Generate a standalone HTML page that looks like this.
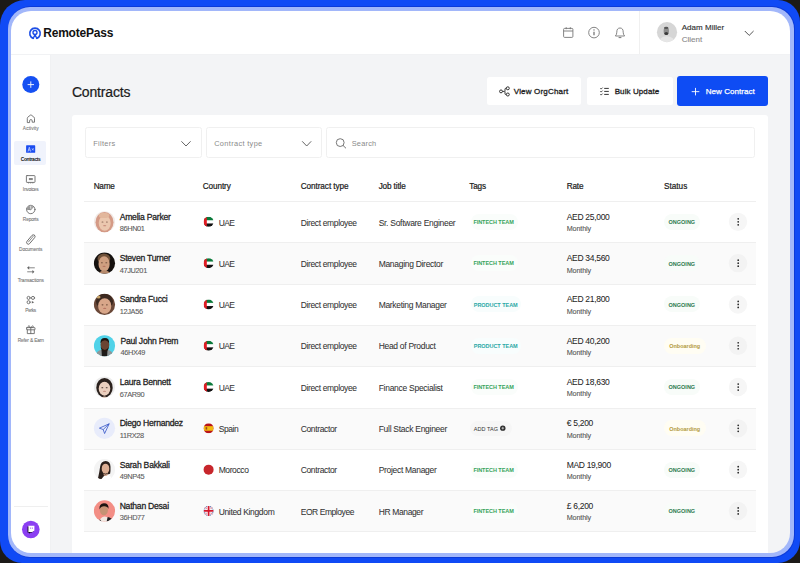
<!DOCTYPE html>
<html><head><meta charset="utf-8"><style>
html,body{margin:0;padding:0;width:800px;height:563px;overflow:hidden;background:#1c1a18;}
#frame{position:absolute;left:0;top:0;width:800px;height:563px;background:#104af5;border-radius:25px 22px 22px 22px;}
#edge{position:absolute;left:7.5px;top:6px;width:787.5px;height:552px;background:#0c3ad8;border-radius:23px;}
#lb{position:absolute;left:8px;top:7px;width:786px;height:550px;background:#a2b7fa;border-radius:22px;}
#app{position:absolute;left:0;top:0;width:800px;height:563px;clip-path:inset(11px 10px 10px 11px round 20px);}
#app span{position:absolute;white-space:pre;line-height:normal;font-family:"Liberation Sans",sans-serif;}
svg{position:absolute;left:0;top:0;}
</style></head><body>
<div id="frame"></div><div id="edge"></div><div id="lb"></div>
<div id="app">
<div style="position:absolute;left:0px;top:0px;width:800px;height:54.5px;background:#ffffff;border-radius:0px;"></div>
<div style="position:absolute;left:0px;top:54px;width:800px;height:1px;background:#f1f2f4;border-radius:0px;"></div>
<div style="position:absolute;left:50px;top:55px;width:750px;height:508px;background:#f3f4f6;border-radius:0px;"></div>
<div style="position:absolute;left:0px;top:55px;width:49.5px;height:508px;background:#ffffff;border-radius:0px;"></div>
<div style="position:absolute;left:49.5px;top:55px;width:1.0px;height:508px;background:#f0f1f3;border-radius:0px;"></div>
<div style="position:absolute;left:638.5px;top:11px;width:1.0px;height:43px;background:#f0f0f0;border-radius:0px;"></div>
<div style="position:absolute;left:14px;top:141px;width:32px;height:23.5px;background:#f0f3fc;border-radius:2px;"></div>
<div style="position:absolute;left:13.5px;top:506.2px;width:34.5px;height:0.8000000000000114px;background:#efefef;border-radius:0px;"></div>
<div style="position:absolute;left:487px;top:76.8px;width:94px;height:28.400000000000006px;background:#ffffff;border-radius:2.5px;"></div>
<div style="position:absolute;left:587px;top:76.8px;width:85.5px;height:28.400000000000006px;background:#ffffff;border-radius:2.5px;"></div>
<div style="position:absolute;left:677px;top:76px;width:91.29999999999995px;height:30px;background:#0e4cf4;border-radius:3px;"></div>
<div style="position:absolute;left:72px;top:115px;width:696px;height:485px;background:#ffffff;border-radius:3px;"></div>
<div style="position:absolute;left:85px;top:127.3px;width:116.69999999999999px;height:30.89999999999999px;background:#fff;border-radius:2.5px;box-sizing:border-box;border:1px solid #f0f0f0;"></div>
<div style="position:absolute;left:205.5px;top:127.3px;width:116.5px;height:30.89999999999999px;background:#fff;border-radius:2.5px;box-sizing:border-box;border:1px solid #f0f0f0;"></div>
<div style="position:absolute;left:326.3px;top:127.3px;width:428.8px;height:30.89999999999999px;background:#fff;border-radius:2.5px;box-sizing:border-box;border:1px solid #f0f0f0;"></div>
<div style="position:absolute;left:84px;top:201px;width:672px;height:1px;background:#efefef;border-radius:0px;"></div>
<div style="position:absolute;left:84px;top:242.3px;width:672px;height:1.0px;background:#efefef;border-radius:0px;"></div>
<div style="position:absolute;left:471px;top:213.85px;width:47px;height:16.0px;background:#fafdfb;border-radius:8px;"></div>
<div style="position:absolute;left:664px;top:213.85px;width:36px;height:16.0px;background:#f8fcf9;border-radius:8px;"></div>
<div style="position:absolute;left:84px;top:243.3px;width:672px;height:40.5px;background:#fafafa;border-radius:0px;"></div>
<div style="position:absolute;left:84px;top:283.6px;width:672px;height:1.0px;background:#efefef;border-radius:0px;"></div>
<div style="position:absolute;left:471px;top:255.14999999999998px;width:47px;height:16.0px;background:#fafdfb;border-radius:8px;"></div>
<div style="position:absolute;left:664px;top:255.14999999999998px;width:36px;height:16.0px;background:#f8fcf9;border-radius:8px;"></div>
<div style="position:absolute;left:84px;top:324.9px;width:672px;height:1.0px;background:#efefef;border-radius:0px;"></div>
<div style="position:absolute;left:471px;top:296.44999999999993px;width:50px;height:16.0px;background:#f8fdfd;border-radius:8px;"></div>
<div style="position:absolute;left:664px;top:296.44999999999993px;width:36px;height:16.0px;background:#f8fcf9;border-radius:8px;"></div>
<div style="position:absolute;left:84px;top:325.9px;width:672px;height:40.5px;background:#fafafa;border-radius:0px;"></div>
<div style="position:absolute;left:84px;top:366.2px;width:672px;height:1.0px;background:#efefef;border-radius:0px;"></div>
<div style="position:absolute;left:471px;top:337.74999999999994px;width:50px;height:16.0px;background:#f8fdfd;border-radius:8px;"></div>
<div style="position:absolute;left:664px;top:337.74999999999994px;width:42px;height:16.0px;background:#fffdf3;border-radius:8px;"></div>
<div style="position:absolute;left:84px;top:407.5px;width:672px;height:1.0px;background:#efefef;border-radius:0px;"></div>
<div style="position:absolute;left:471px;top:379.04999999999995px;width:47px;height:16.0px;background:#fafdfb;border-radius:8px;"></div>
<div style="position:absolute;left:664px;top:379.04999999999995px;width:36px;height:16.0px;background:#f8fcf9;border-radius:8px;"></div>
<div style="position:absolute;left:84px;top:408.5px;width:672px;height:40.5px;background:#fafafa;border-radius:0px;"></div>
<div style="position:absolute;left:84px;top:448.8px;width:672px;height:1.0px;background:#efefef;border-radius:0px;"></div>
<div style="position:absolute;left:470px;top:420.84999999999997px;width:42px;height:15.0px;background:#f6f6f6;border-radius:8px;"></div>
<div style="position:absolute;left:664px;top:420.34999999999997px;width:42px;height:16.0px;background:#fffdf3;border-radius:8px;"></div>
<div style="position:absolute;left:84px;top:490.1px;width:672px;height:1.0px;background:#efefef;border-radius:0px;"></div>
<div style="position:absolute;left:471px;top:461.65px;width:47px;height:16.0px;background:#fafdfb;border-radius:8px;"></div>
<div style="position:absolute;left:664px;top:461.65px;width:36px;height:16.0px;background:#f8fcf9;border-radius:8px;"></div>
<div style="position:absolute;left:84px;top:491.09999999999997px;width:672px;height:40.49999999999994px;background:#fafafa;border-radius:0px;"></div>
<div style="position:absolute;left:84px;top:531.3999999999999px;width:672px;height:1.0px;background:#efefef;border-radius:0px;"></div>
<div style="position:absolute;left:471px;top:502.94999999999993px;width:47px;height:16.0px;background:#fafdfb;border-radius:8px;"></div>
<div style="position:absolute;left:664px;top:502.94999999999993px;width:36px;height:16.0px;background:#f8fcf9;border-radius:8px;"></div>
<svg width="800" height="563" viewBox="0 0 800 563">
<g fill="none" stroke="#1d4fe6" stroke-linecap="butt"><path d="M33.3 38.4 A5.25 5.25 0 1 1 36.7 38.4" stroke-width="1.7"/><circle cx="35" cy="32.5" r="2.0" stroke-width="1.4"/><path d="M33.2 39 Q33.8 36.4 35 34.6 Q36.2 36.4 36.8 39" stroke-width="1.3"/></g>
<g fill="none" stroke="#777" stroke-width="0.9"><rect x="563.6" y="28.4" width="9.3" height="9" rx="1"/><path d="M563.6 31 H572.9"/><path d="M566.2 27.2 V29.2 M570.3 27.2 V29.2"/><circle cx="594" cy="32.6" r="5.3"/><path d="M594 31.7 V35.3" stroke="#666" stroke-width="1.15"/><path d="M615.4 36 Q616.8 34.6 616.8 32.2 Q616.8 28 620 28 Q623.2 28 623.2 32.2 Q623.2 34.6 624.6 36 Z"/><path d="M618.6 37.6 H621.4" stroke-width="1"/></g><circle cx="594" cy="29.9" r="0.7" fill="#666"/>
<defs><clipPath id="cav"><circle cx="667" cy="32.2" r="10.1"/></clipPath></defs><circle cx="667" cy="32.2" r="10.1" fill="#d6d6d6"/><g clip-path="url(#cav)"><path d="M658 44 Q659 36.6 666.5 36.2 Q675 36.6 676 44 Z" fill="#e6e6e6"/><ellipse cx="666.3" cy="31" rx="2.7" ry="4" fill="#8c8c8c"/><ellipse cx="666.3" cy="33.6" rx="1.9" ry="1.5" fill="#3a3a3a"/><ellipse cx="666.2" cy="27.9" rx="2.2" ry="1.1" fill="#555"/></g>
<path d="M744.8 31 L749.2 35.4 L753.6 31" fill="none" stroke="#4a4a4a" stroke-width="0.95"/>
<circle cx="30.8" cy="84.6" r="8.5" fill="#1550f2"/><path d="M30.8 81.4 V87.8 M27.6 84.6 H34" stroke="#fff" stroke-width="0.9"/>
<g fill="none" stroke="#6a6a6a" stroke-width="0.9" stroke-linejoin="round" stroke-linecap="round"><path d="M27.3 122.2 V118.4 Q27.3 117.6 28 117 L30.6 115 Q30.9 114.8 31.2 115 L33.8 117 Q34.5 117.6 34.5 118.4 V122.2 H32.2 V120.8 Q32.2 119.6 30.9 119.6 Q29.6 119.6 29.6 120.8 V122.2 Z"/><rect x="26.4" y="175.6" width="8.6" height="6.8" rx="0.6"/><path d="M28.6 183.2 V182.6 M30.7 183.2 V182.6 M32.8 183.2 V182.6" stroke-width="0.6"/><circle cx="30.8" cy="209.5" r="4.2"/><path d="M26.7 209 L30.8 209.8 L33.6 206.4"/><rect x="-1.75" y="-5.6" width="3.5" height="11.2" rx="1.75" transform="translate(30.8 239.5) rotate(40)"/><path d="M-0.2 -4 V3.4" transform="translate(30.8 239.5) rotate(40)" stroke-width="0.7"/><path d="M29 267.8 H34.4 M27.6 271.8 H33" stroke="#888" stroke-width="1"/><circle cx="28.6" cy="297.9" r="1.55"/><circle cx="33" cy="297.9" r="1.55"/><circle cx="28.6" cy="302.2" r="1.55"/><rect x="26.6" y="327.6" width="8.4" height="2.2" rx="0.4"/><path d="M27.3 329.8 V333.6 H34.3 V329.8 M30.8 327.6 V333.6"/><path d="M30.8 327.6 Q28.6 324.4 28.2 326.4 Q28 327.4 30.8 327.6 Q33 324.4 33.4 326.4 Q33.6 327.4 30.8 327.6" stroke-width="0.8"/></g><g fill="#666"><rect x="28.9" y="178" width="3.9" height="2.1" fill="#888"/><path d="M30.8 209.8 L26.7 209 Q27.2 206.6 29.6 205.6 Z" fill="#9a9a9a"/><path d="M30.8 209.5 L33.6 206.4 Q32.2 205.3 30.4 205.3 Z" fill="#aaa"/><path d="M27 267.8 L29.2 265.9 V269.7 Z M34.4 271.8 L32.4 269.9 V273.7 Z"/><path d="M31.8 300.9 L34.2 302.2 L31.8 303.5 Z"/></g><rect x="26.1" y="145.3" width="9.1" height="7.5" rx="0.6" fill="#1a4cf0"/><path d="M28 151.6 L29.3 147.2 L30.6 151.6 M28.5 150 H30.1 M32 148.4 L33.6 150.4 M33.6 148.4 L32 150.4" fill="none" stroke="#dfe6ff" stroke-width="0.65"/>
<circle cx="30.8" cy="529.5" r="8.8" fill="#8b3ff2"/><path d="M27.6 526.4 H34 V531 L31.8 532.6 H30.4 L29.2 533.8 V532.6 H27.6 Z" fill="#000"/><path d="M28.4 525.8 H34.4 V530.4 L32.4 532 H28.4 Z" fill="#fff"/><path d="M30.6 527.4 V529 M32.4 527.4 V529" stroke="#8b3ff2" stroke-width="0.6"/>
<g fill="none" stroke="#2a2a2a" stroke-width="0.95"><circle cx="501" cy="91.4" r="1.45"/><circle cx="507.8" cy="88.3" r="1.5"/><circle cx="507.8" cy="94.5" r="1.5"/><path d="M502.5 91.4 H504.2 Q505 91.4 505 90.6 V89.1 Q505 88.3 505.8 88.3 H506.3 M505 91.4 V93.7 Q505 94.5 505.8 94.5 H506.3"/><path d="M600.3 88.3 L601.1 89.1 L602.6 87.6 M600.3 91.3 L601.1 92.1 L602.6 90.6 M600.3 94.3 L601.1 95.1 L602.6 93.6" stroke-width="0.85"/><path d="M604.2 88.4 H608.8 M604.2 91.4 H608.8 M604.2 94.4 H608.8" stroke-width="0.95"/></g><path d="M695.5 87.9 V95.4 M691.7 91.65 H699.3" stroke="#fff" stroke-width="0.9"/>
<g fill="none" stroke="#555" stroke-width="0.9"><path d="M181.4 141.3 L186 146 L190.6 141.3"/><path d="M302.2 141.3 L306.7 146 L311.2 141.3"/><circle cx="340.2" cy="142.6" r="3.9" stroke="#666"/><path d="M343 145.4 L346 148.3" stroke="#666"/></g>
<clipPath id="av0"><circle cx="0" cy="0" r="10.6"/></clipPath>
<g clip-path="url(#av0)" transform="translate(104.5 221.85)"><rect x="-11" y="-11" width="22" height="22" fill="#f2ebe8"/><ellipse cx="0" cy="0.4" rx="9" ry="10.2" fill="#d49a86"/><ellipse cx="0.2" cy="1.2" rx="6" ry="7.6" fill="#ebc7ae"/><ellipse cx="-0.5" cy="-6.4" rx="5.2" ry="2.6" fill="#e2b79c"/><ellipse cx="-2.0" cy="0.2" rx="1.0" ry="0.55" fill="#6a4436" opacity="0.75"/><ellipse cx="2.4" cy="0.2" rx="1.0" ry="0.55" fill="#6a4436" opacity="0.75"/><ellipse cx="0.2" cy="3.8" rx="1.6" ry="0.6" fill="#b0655a" opacity="0.6"/></g>
<clipPath id="fl0"><circle cx="208.6" cy="221.85" r="5"/></clipPath><g clip-path="url(#fl0)"><rect x="203.6" y="216.85" width="10" height="10" fill="#fff"/><rect x="203.6" y="216.85" width="10" height="3.4" fill="#0a7a3a"/><rect x="203.6" y="223.45" width="10" height="3.4" fill="#111"/><rect x="203.6" y="216.85" width="3.2" height="10" fill="#e01b22"/></g>
<circle cx="738" cy="221.85" r="9.2" fill="#f6f6f6"/><circle cx="738.2" cy="218.85" r="0.85" fill="#222"/><circle cx="738.2" cy="221.85" r="0.85" fill="#222"/><circle cx="738.2" cy="224.85" r="0.85" fill="#222"/>
<clipPath id="av1"><circle cx="0" cy="0" r="10.6"/></clipPath>
<g clip-path="url(#av1)" transform="translate(104.5 263.15)"><rect x="-11" y="-11" width="22" height="22" fill="#15110f"/><ellipse cx="-0.6" cy="-4.4" rx="6.4" ry="5.2" fill="#6e5038"/><ellipse cx="-0.4" cy="0.8" rx="5.6" ry="7.6" fill="#cf9f80"/><path d="M-5 9 Q0 5 5 9 L5 11 L-5 11 Z" fill="#b68a6c"/><ellipse cx="-2.60" cy="-0.40" rx="1.00" ry="0.55" fill="#4a2e20" opacity="0.75"/><ellipse cx="1.80" cy="-0.40" rx="1.00" ry="0.55" fill="#4a2e20" opacity="0.75"/><ellipse cx="-0.40" cy="3.20" rx="1.60" ry="0.6" fill="#a5574a" opacity="0.6"/></g>
<clipPath id="fl1"><circle cx="208.6" cy="263.15" r="5"/></clipPath><g clip-path="url(#fl1)"><rect x="203.6" y="258.15" width="10" height="10" fill="#fff"/><rect x="203.6" y="258.15" width="10" height="3.4" fill="#0a7a3a"/><rect x="203.6" y="264.75" width="10" height="3.4" fill="#111"/><rect x="203.6" y="258.15" width="3.2" height="10" fill="#e01b22"/></g>
<circle cx="738" cy="263.15" r="9.2" fill="#f3f3f3"/><circle cx="738.2" cy="260.15" r="0.85" fill="#222"/><circle cx="738.2" cy="263.15" r="0.85" fill="#222"/><circle cx="738.2" cy="266.15" r="0.85" fill="#222"/>
<clipPath id="av2"><circle cx="0" cy="0" r="10.6"/></clipPath>
<g clip-path="url(#av2)" transform="translate(104.5 304.44999999999993)"><rect x="-11" y="-11" width="22" height="22" fill="#6a4838"/><ellipse cx="0" cy="-3" rx="8.6" ry="7.6" fill="#3c2920"/><ellipse cx="0.2" cy="1.6" rx="6.6" ry="7.8" fill="#d8a689"/><ellipse cx="-6" cy="-7.4" rx="2" ry="1.5" fill="#c9a56a"/><ellipse cx="-2.00" cy="0.40" rx="1.00" ry="0.55" fill="#4a2e20" opacity="0.75"/><ellipse cx="2.40" cy="0.40" rx="1.00" ry="0.55" fill="#4a2e20" opacity="0.75"/><ellipse cx="0.20" cy="4.00" rx="1.60" ry="0.6" fill="#a5574a" opacity="0.6"/></g>
<clipPath id="fl2"><circle cx="208.6" cy="304.44999999999993" r="5"/></clipPath><g clip-path="url(#fl2)"><rect x="203.6" y="299.44999999999993" width="10" height="10" fill="#fff"/><rect x="203.6" y="299.44999999999993" width="10" height="3.4" fill="#0a7a3a"/><rect x="203.6" y="306.04999999999995" width="10" height="3.4" fill="#111"/><rect x="203.6" y="299.44999999999993" width="3.2" height="10" fill="#e01b22"/></g>
<circle cx="738" cy="304.44999999999993" r="9.2" fill="#f6f6f6"/><circle cx="738.2" cy="301.44999999999993" r="0.85" fill="#222"/><circle cx="738.2" cy="304.44999999999993" r="0.85" fill="#222"/><circle cx="738.2" cy="307.44999999999993" r="0.85" fill="#222"/>
<clipPath id="av3"><circle cx="0" cy="0" r="10.6"/></clipPath>
<g clip-path="url(#av3)" transform="translate(104.5 345.74999999999994)"><rect x="-11" y="-11" width="22" height="22" fill="#50d2e8"/><path d="M-10 11 Q-8 5 -3 4 L3 4 Q8 5 10 11 Z" fill="#8f9596"/><path d="M-3 4 L3 4 L2.6 11 L-2.6 11 Z" fill="#1e1a18"/><ellipse cx="0.4" cy="-1" rx="4.4" ry="5.6" fill="#6a4432"/><path d="M-4 -2.5 Q-4.4 -7.8 0.4 -7.8 Q5 -7.8 4.6 -2.5 Q3 -5.5 0.4 -5.5 Q-2.4 -5.5 -4 -2.5 Z" fill="#1f1511"/><path d="M-3.8 1 Q0.4 7.6 4.4 1 Q4 5.5 0.4 6 Q-3.4 5.5 -3.8 1 Z" fill="#24160f"/></g>
<clipPath id="fl3"><circle cx="208.6" cy="345.74999999999994" r="5"/></clipPath><g clip-path="url(#fl3)"><rect x="203.6" y="340.74999999999994" width="10" height="10" fill="#fff"/><rect x="203.6" y="340.74999999999994" width="10" height="3.4" fill="#0a7a3a"/><rect x="203.6" y="347.34999999999997" width="10" height="3.4" fill="#111"/><rect x="203.6" y="340.74999999999994" width="3.2" height="10" fill="#e01b22"/></g>
<circle cx="738" cy="345.74999999999994" r="9.2" fill="#f3f3f3"/><circle cx="738.2" cy="342.74999999999994" r="0.85" fill="#222"/><circle cx="738.2" cy="345.74999999999994" r="0.85" fill="#222"/><circle cx="738.2" cy="348.74999999999994" r="0.85" fill="#222"/>
<clipPath id="av4"><circle cx="0" cy="0" r="10.6"/></clipPath>
<g clip-path="url(#av4)" transform="translate(104.5 387.04999999999995)"><rect x="-11" y="-11" width="22" height="22" fill="#ededed"/><ellipse cx="0" cy="0.6" rx="8.2" ry="9.6" fill="#2b211d"/><ellipse cx="0" cy="1.6" rx="5.8" ry="7" fill="#ebcfbe"/><path d="M-3 11 Q0 8 3 11 Z" fill="#e0c0ae"/><ellipse cx="-2.20" cy="0.60" rx="1.00" ry="0.55" fill="#3a2a24" opacity="0.75"/><ellipse cx="2.20" cy="0.60" rx="1.00" ry="0.55" fill="#3a2a24" opacity="0.75"/><ellipse cx="0.00" cy="4.20" rx="1.60" ry="0.6" fill="#a5574a" opacity="0.6"/></g>
<clipPath id="fl4"><circle cx="208.6" cy="387.04999999999995" r="5"/></clipPath><g clip-path="url(#fl4)"><rect x="203.6" y="382.04999999999995" width="10" height="10" fill="#fff"/><rect x="203.6" y="382.04999999999995" width="10" height="3.4" fill="#0a7a3a"/><rect x="203.6" y="388.65" width="10" height="3.4" fill="#111"/><rect x="203.6" y="382.04999999999995" width="3.2" height="10" fill="#e01b22"/></g>
<circle cx="738" cy="387.04999999999995" r="9.2" fill="#f6f6f6"/><circle cx="738.2" cy="384.04999999999995" r="0.85" fill="#222"/><circle cx="738.2" cy="387.04999999999995" r="0.85" fill="#222"/><circle cx="738.2" cy="390.04999999999995" r="0.85" fill="#222"/>
<clipPath id="av5"><circle cx="0" cy="0" r="10.6"/></clipPath>
<circle cx="104.5" cy="428.34999999999997" r="10.6" fill="#e8ecfb"/><path d="M99.4 428.15 L109.2 423.74999999999994 L104.6 433.54999999999995 L103.2 429.54999999999995 Z M103.2 429.54999999999995 L109.2 423.74999999999994" fill="none" stroke="#3556c8" stroke-width="0.8" stroke-linejoin="round"/>
<clipPath id="fl5"><circle cx="208.6" cy="428.34999999999997" r="5"/></clipPath><g clip-path="url(#fl5)"><rect x="203.6" y="423.34999999999997" width="10" height="10" fill="#b8141a"/><rect x="203.6" y="426.15" width="10" height="4.6" fill="#f2b90f"/><rect x="205.6" y="427.15" width="1.6" height="2.4" fill="#a0461c"/></g>
<circle cx="502.8" cy="428.15" r="2.7" fill="#2a2a2a"/><path d="M502.8 426.74999999999994 V429.54999999999995 M501.4 428.15 H504.2" stroke="#fff" stroke-width="0.6"/>
<circle cx="738" cy="428.34999999999997" r="9.2" fill="#f3f3f3"/><circle cx="738.2" cy="425.34999999999997" r="0.85" fill="#222"/><circle cx="738.2" cy="428.34999999999997" r="0.85" fill="#222"/><circle cx="738.2" cy="431.34999999999997" r="0.85" fill="#222"/>
<clipPath id="av6"><circle cx="0" cy="0" r="10.6"/></clipPath>
<g clip-path="url(#av6)" transform="translate(104.5 469.65)"><rect x="-11" y="-11" width="22" height="22" fill="#f4f4f4"/><path d="M-4 11 Q-2 5 2 5 Q7 5.4 8 11 Z" fill="#ffffff"/><path d="M-6.6 9 Q-5 2 -4.4 -3 Q-3.6 -8.4 1.2 -8.6 Q5.8 -8.4 6 -3 Q6.2 2 5.6 4 L2 5 Q-1 6 -3 9.4 Z" fill="#2a1f1b"/><ellipse cx="1" cy="-1" rx="3.8" ry="5" fill="#dcae94"/><path d="M-1 3.4 Q1 6.4 3.4 3.4 L3 5.6 Q1 6.8 -0.8 5.6 Z" fill="#cf9f86"/></g>
<circle cx="208.6" cy="469.65" r="5" fill="#c7262c"/>
<circle cx="738" cy="469.65" r="9.2" fill="#f6f6f6"/><circle cx="738.2" cy="466.65" r="0.85" fill="#222"/><circle cx="738.2" cy="469.65" r="0.85" fill="#222"/><circle cx="738.2" cy="472.65" r="0.85" fill="#222"/>
<clipPath id="av7"><circle cx="0" cy="0" r="10.6"/></clipPath>
<g clip-path="url(#av7)" transform="translate(104.5 510.94999999999993)"><rect x="-11" y="-11" width="22" height="22" fill="#f38e85"/><path d="M-6 11 Q-4 6 0 5.5 Q5 6 9 11 Z" fill="#f1e6e0"/><path d="M2 11 L3.2 6 Q7 6.4 9.5 11 Z" fill="#1f1f22"/><path d="M-6 11 L-4.6 8.4 L-2.6 11 Z" fill="#1f1f22"/><ellipse cx="-0.6" cy="-0.8" rx="4" ry="5.2" fill="#c59274"/><path d="M-5 -1.5 Q-5.6 -7.4 -0.6 -7.6 Q4.6 -7.6 4 -2 Q3 -4.8 -0.6 -4.6 Q-3.6 -4.6 -5 -1.5 Z" fill="#1c1411"/></g>
<clipPath id="fl7"><circle cx="208.6" cy="510.94999999999993" r="5"/></clipPath><g clip-path="url(#fl7)"><rect x="203.6" y="505.94999999999993" width="10" height="10" fill="#2a3a8a"/><path d="M203.6 505.94999999999993 L213.6 515.9499999999999 M213.6 505.94999999999993 L203.6 515.9499999999999" stroke="#fff" stroke-width="2.4"/><path d="M203.6 505.94999999999993 L213.6 515.9499999999999 M213.6 505.94999999999993 L203.6 515.9499999999999" stroke="#d4162c" stroke-width="0.7"/><path d="M208.6 505.94999999999993 V515.9499999999999 M203.6 510.94999999999993 H213.6" stroke="#fff" stroke-width="3.2"/><path d="M208.6 505.94999999999993 V515.9499999999999 M203.6 510.94999999999993 H213.6" stroke="#d4162c" stroke-width="1.8"/></g>
<circle cx="738" cy="510.94999999999993" r="9.2" fill="#f3f3f3"/><circle cx="738.2" cy="507.94999999999993" r="0.85" fill="#222"/><circle cx="738.2" cy="510.94999999999993" r="0.85" fill="#222"/><circle cx="738.2" cy="513.9499999999999" r="0.85" fill="#222"/>
</svg>
<span style="left:43.27px;top:25.64px;font-size:12px;font-weight:700;color:#111;letter-spacing:-0.217px;">RemotePass</span>
<span style="left:681.68px;top:22.66px;font-size:8px;font-weight:400;color:#333;letter-spacing:0.033px;-webkit-text-stroke:0.15px #333">Adam Miller</span>
<span style="left:681.68px;top:34.76px;font-size:8px;font-weight:400;color:#888;letter-spacing:0.021px;-webkit-text-stroke:0.10px #888">Client</span>
<span style="left:22.86px;top:126.36px;font-size:4.8px;font-weight:400;color:#7a7a7a;letter-spacing:0.090px;-webkit-text-stroke:0.10px #7a7a7a">Activity</span>
<span style="left:20.76px;top:156.86px;font-size:4.8px;font-weight:700;color:#111;letter-spacing:-0.294px;">Contracts</span>
<span style="left:22.86px;top:186.86px;font-size:4.8px;font-weight:400;color:#7a7a7a;letter-spacing:-0.253px;-webkit-text-stroke:0.10px #7a7a7a">Invoices</span>
<span style="left:22.86px;top:216.86px;font-size:4.8px;font-weight:400;color:#7a7a7a;letter-spacing:-0.160px;-webkit-text-stroke:0.10px #7a7a7a">Reports</span>
<span style="left:19.11px;top:247.36px;font-size:4.8px;font-weight:400;color:#7a7a7a;letter-spacing:-0.116px;-webkit-text-stroke:0.10px #7a7a7a">Documents</span>
<span style="left:17.66px;top:277.86px;font-size:4.8px;font-weight:400;color:#7a7a7a;letter-spacing:-0.096px;-webkit-text-stroke:0.10px #7a7a7a">Transactions</span>
<span style="left:25.36px;top:307.86px;font-size:4.8px;font-weight:400;color:#7a7a7a;letter-spacing:-0.357px;-webkit-text-stroke:0.10px #7a7a7a">Perks</span>
<span style="left:17.66px;top:337.86px;font-size:4.8px;font-weight:400;color:#7a7a7a;letter-spacing:-0.136px;-webkit-text-stroke:0.10px #7a7a7a">Refer &amp; Earn</span>
<span style="left:71.94px;top:83.93px;font-size:14px;font-weight:400;color:#1b1b1b;letter-spacing:-0.180px;-webkit-text-stroke:0.20px #1b1b1b">Contracts</span>
<span style="left:513.78px;top:86.86px;font-size:8px;font-weight:400;color:#1e1e1e;letter-spacing:0.178px;-webkit-text-stroke:0.30px #1e1e1e">View OrgChart</span>
<span style="left:614.68px;top:86.76px;font-size:8px;font-weight:400;color:#1e1e1e;letter-spacing:0.097px;-webkit-text-stroke:0.30px #1e1e1e">Bulk Update</span>
<span style="left:705.68px;top:86.76px;font-size:8px;font-weight:400;color:#fff;letter-spacing:0.063px;-webkit-text-stroke:0.25px #fff">New Contract</span>
<span style="left:93.30px;top:139.20px;font-size:7.4px;font-weight:400;color:#8a8a8a;letter-spacing:0.299px;">Filters</span>
<span style="left:214.20px;top:139.20px;font-size:7.4px;font-weight:400;color:#8a8a8a;letter-spacing:0.337px;">Contract type</span>
<span style="left:351.70px;top:139.20px;font-size:7.4px;font-weight:400;color:#8a8a8a;letter-spacing:0.219px;">Search</span>
<span style="left:93.67px;top:181.88px;font-size:8.2px;font-weight:400;color:#1a1a1a;letter-spacing:-0.223px;-webkit-text-stroke:0.20px #1a1a1a">Name</span>
<span style="left:202.67px;top:181.88px;font-size:8.2px;font-weight:400;color:#1a1a1a;letter-spacing:-0.083px;-webkit-text-stroke:0.20px #1a1a1a">Country</span>
<span style="left:300.67px;top:181.88px;font-size:8.2px;font-weight:400;color:#1a1a1a;letter-spacing:-0.061px;-webkit-text-stroke:0.20px #1a1a1a">Contract type</span>
<span style="left:378.67px;top:181.88px;font-size:8.2px;font-weight:400;color:#1a1a1a;letter-spacing:-0.131px;-webkit-text-stroke:0.20px #1a1a1a">Job title</span>
<span style="left:469.27px;top:181.88px;font-size:8.2px;font-weight:400;color:#1a1a1a;letter-spacing:-0.174px;-webkit-text-stroke:0.20px #1a1a1a">Tags</span>
<span style="left:566.67px;top:181.88px;font-size:8.2px;font-weight:400;color:#1a1a1a;letter-spacing:-0.174px;-webkit-text-stroke:0.20px #1a1a1a">Rate</span>
<span style="left:664.07px;top:181.88px;font-size:8.2px;font-weight:400;color:#1a1a1a;letter-spacing:-0.009px;-webkit-text-stroke:0.20px #1a1a1a">Status</span>
<span style="left:119.66px;top:211.72px;font-size:8.6px;font-weight:400;color:#1f1f1f;letter-spacing:-0.230px;-webkit-text-stroke:0.28px #1f1f1f">Amelia Parker</span>
<span style="left:119.70px;top:224.30px;font-size:7.4px;font-weight:400;color:#5c5c5c;letter-spacing:-0.370px;-webkit-text-stroke:0.10px #5c5c5c">86HN01</span>
<span style="left:218.66px;top:217.51px;font-size:8.5px;font-weight:400;color:#333;letter-spacing:-0.638px;-webkit-text-stroke:0.05px #333">UAE</span>
<span style="left:300.66px;top:217.51px;font-size:8.5px;font-weight:400;color:#333;letter-spacing:-0.361px;-webkit-text-stroke:0.05px #333">Direct employee</span>
<span style="left:378.66px;top:217.51px;font-size:8.5px;font-weight:400;color:#333;letter-spacing:-0.282px;-webkit-text-stroke:0.05px #333">Sr. Software Engineer</span>
<span style="left:566.66px;top:211.81px;font-size:8.5px;font-weight:400;color:#262626;letter-spacing:-0.300px;-webkit-text-stroke:0.05px #262626">AED 25,000</span>
<span style="left:566.71px;top:224.28px;font-size:7.2px;font-weight:400;color:#555;letter-spacing:-0.120px;-webkit-text-stroke:0.10px #555">Monthly</span>
<span style="left:473.38px;top:219.02px;font-size:5.5px;font-weight:700;color:#35a35a;letter-spacing:-0.052px;">FINTECH TEAM</span>
<span style="left:668.48px;top:219.22px;font-size:5.5px;font-weight:700;color:#2c7a4e;letter-spacing:0.015px;">ONGOING</span>
<span style="left:119.66px;top:253.02px;font-size:8.6px;font-weight:400;color:#1f1f1f;letter-spacing:-0.230px;-webkit-text-stroke:0.28px #1f1f1f">Steven Turner</span>
<span style="left:119.70px;top:265.60px;font-size:7.4px;font-weight:400;color:#5c5c5c;letter-spacing:-0.337px;-webkit-text-stroke:0.10px #5c5c5c">47JU201</span>
<span style="left:218.66px;top:258.81px;font-size:8.5px;font-weight:400;color:#333;letter-spacing:-0.638px;-webkit-text-stroke:0.05px #333">UAE</span>
<span style="left:300.66px;top:258.81px;font-size:8.5px;font-weight:400;color:#333;letter-spacing:-0.361px;-webkit-text-stroke:0.05px #333">Direct employee</span>
<span style="left:378.66px;top:258.81px;font-size:8.5px;font-weight:400;color:#333;letter-spacing:-0.296px;-webkit-text-stroke:0.05px #333">Managing Director</span>
<span style="left:566.66px;top:253.11px;font-size:8.5px;font-weight:400;color:#262626;letter-spacing:-0.300px;-webkit-text-stroke:0.05px #262626">AED 34,560</span>
<span style="left:566.71px;top:265.58px;font-size:7.2px;font-weight:400;color:#555;letter-spacing:-0.120px;-webkit-text-stroke:0.10px #555">Monthly</span>
<span style="left:473.38px;top:260.32px;font-size:5.5px;font-weight:700;color:#35a35a;letter-spacing:-0.052px;">FINTECH TEAM</span>
<span style="left:668.48px;top:260.52px;font-size:5.5px;font-weight:700;color:#2c7a4e;letter-spacing:0.015px;">ONGOING</span>
<span style="left:119.66px;top:294.32px;font-size:8.6px;font-weight:400;color:#1f1f1f;letter-spacing:-0.236px;-webkit-text-stroke:0.28px #1f1f1f">Sandra Fucci</span>
<span style="left:119.70px;top:306.90px;font-size:7.4px;font-weight:400;color:#5c5c5c;letter-spacing:-0.342px;-webkit-text-stroke:0.10px #5c5c5c">12JA56</span>
<span style="left:218.66px;top:300.11px;font-size:8.5px;font-weight:400;color:#333;letter-spacing:-0.638px;-webkit-text-stroke:0.05px #333">UAE</span>
<span style="left:300.66px;top:300.11px;font-size:8.5px;font-weight:400;color:#333;letter-spacing:-0.361px;-webkit-text-stroke:0.05px #333">Direct employee</span>
<span style="left:378.66px;top:300.11px;font-size:8.5px;font-weight:400;color:#333;letter-spacing:-0.312px;-webkit-text-stroke:0.05px #333">Marketing Manager</span>
<span style="left:566.66px;top:294.41px;font-size:8.5px;font-weight:400;color:#262626;letter-spacing:-0.300px;-webkit-text-stroke:0.05px #262626">AED 21,800</span>
<span style="left:566.71px;top:306.88px;font-size:7.2px;font-weight:400;color:#555;letter-spacing:-0.120px;-webkit-text-stroke:0.10px #555">Monthly</span>
<span style="left:473.78px;top:301.82px;font-size:5.5px;font-weight:700;color:#2aa8a6;letter-spacing:-0.039px;">PRODUCT TEAM</span>
<span style="left:668.48px;top:301.82px;font-size:5.5px;font-weight:700;color:#2c7a4e;letter-spacing:0.015px;">ONGOING</span>
<span style="left:120.46px;top:335.62px;font-size:8.6px;font-weight:400;color:#1f1f1f;letter-spacing:-0.241px;-webkit-text-stroke:0.28px #1f1f1f">Paul John Prem</span>
<span style="left:120.50px;top:348.20px;font-size:7.4px;font-weight:400;color:#5c5c5c;letter-spacing:-0.365px;-webkit-text-stroke:0.10px #5c5c5c">46HX49</span>
<span style="left:218.66px;top:341.41px;font-size:8.5px;font-weight:400;color:#333;letter-spacing:-0.638px;-webkit-text-stroke:0.05px #333">UAE</span>
<span style="left:300.66px;top:341.41px;font-size:8.5px;font-weight:400;color:#333;letter-spacing:-0.361px;-webkit-text-stroke:0.05px #333">Direct employee</span>
<span style="left:378.66px;top:341.41px;font-size:8.5px;font-weight:400;color:#333;letter-spacing:-0.299px;-webkit-text-stroke:0.05px #333">Head of Product</span>
<span style="left:566.66px;top:335.71px;font-size:8.5px;font-weight:400;color:#262626;letter-spacing:-0.300px;-webkit-text-stroke:0.05px #262626">AED 40,200</span>
<span style="left:566.71px;top:348.18px;font-size:7.2px;font-weight:400;color:#555;letter-spacing:-0.120px;-webkit-text-stroke:0.10px #555">Monthly</span>
<span style="left:473.78px;top:343.12px;font-size:5.5px;font-weight:700;color:#2aa8a6;letter-spacing:-0.039px;">PRODUCT TEAM</span>
<span style="left:669.28px;top:343.32px;font-size:5.5px;font-weight:700;color:#b39a3c;letter-spacing:-0.032px;">Onboarding</span>
<span style="left:119.66px;top:376.92px;font-size:8.6px;font-weight:400;color:#1f1f1f;letter-spacing:-0.230px;-webkit-text-stroke:0.28px #1f1f1f">Laura Bennett</span>
<span style="left:119.70px;top:389.50px;font-size:7.4px;font-weight:400;color:#5c5c5c;letter-spacing:-0.365px;-webkit-text-stroke:0.10px #5c5c5c">67AR90</span>
<span style="left:218.66px;top:382.71px;font-size:8.5px;font-weight:400;color:#333;letter-spacing:-0.638px;-webkit-text-stroke:0.05px #333">UAE</span>
<span style="left:300.66px;top:382.71px;font-size:8.5px;font-weight:400;color:#333;letter-spacing:-0.361px;-webkit-text-stroke:0.05px #333">Direct employee</span>
<span style="left:378.66px;top:382.71px;font-size:8.5px;font-weight:400;color:#333;letter-spacing:-0.277px;-webkit-text-stroke:0.05px #333">Finance Specialist</span>
<span style="left:566.66px;top:377.01px;font-size:8.5px;font-weight:400;color:#262626;letter-spacing:-0.300px;-webkit-text-stroke:0.05px #262626">AED 18,630</span>
<span style="left:566.71px;top:389.48px;font-size:7.2px;font-weight:400;color:#555;letter-spacing:-0.120px;-webkit-text-stroke:0.10px #555">Monthly</span>
<span style="left:473.38px;top:384.22px;font-size:5.5px;font-weight:700;color:#35a35a;letter-spacing:-0.052px;">FINTECH TEAM</span>
<span style="left:668.48px;top:384.42px;font-size:5.5px;font-weight:700;color:#2c7a4e;letter-spacing:0.015px;">ONGOING</span>
<span style="left:119.66px;top:418.22px;font-size:8.6px;font-weight:400;color:#1f1f1f;letter-spacing:-0.244px;-webkit-text-stroke:0.28px #1f1f1f">Diego Hernandez</span>
<span style="left:119.70px;top:430.80px;font-size:7.4px;font-weight:400;color:#5c5c5c;letter-spacing:-0.357px;-webkit-text-stroke:0.10px #5c5c5c">11RX28</span>
<span style="left:218.66px;top:424.01px;font-size:8.5px;font-weight:400;color:#333;letter-spacing:-0.397px;-webkit-text-stroke:0.05px #333">Spain</span>
<span style="left:300.66px;top:424.01px;font-size:8.5px;font-weight:400;color:#333;letter-spacing:-0.363px;-webkit-text-stroke:0.05px #333">Contractor</span>
<span style="left:378.66px;top:424.01px;font-size:8.5px;font-weight:400;color:#333;letter-spacing:-0.279px;-webkit-text-stroke:0.05px #333">Full Stack Engineer</span>
<span style="left:566.66px;top:418.31px;font-size:8.5px;font-weight:400;color:#262626;letter-spacing:-0.278px;-webkit-text-stroke:0.05px #262626">€ 5,200</span>
<span style="left:566.71px;top:430.78px;font-size:7.2px;font-weight:400;color:#555;letter-spacing:-0.120px;-webkit-text-stroke:0.10px #555">Monthly</span>
<span style="left:473.78px;top:425.72px;font-size:5.5px;font-weight:400;color:#333;letter-spacing:0.072px;">ADD TAG</span>
<span style="left:669.28px;top:425.92px;font-size:5.5px;font-weight:700;color:#b39a3c;letter-spacing:-0.032px;">Onboarding</span>
<span style="left:119.66px;top:459.52px;font-size:8.6px;font-weight:400;color:#1f1f1f;letter-spacing:-0.226px;-webkit-text-stroke:0.28px #1f1f1f">Sarah Bakkali</span>
<span style="left:119.70px;top:472.10px;font-size:7.4px;font-weight:400;color:#5c5c5c;letter-spacing:-0.365px;-webkit-text-stroke:0.10px #5c5c5c">49NP45</span>
<span style="left:218.66px;top:465.31px;font-size:8.5px;font-weight:400;color:#333;letter-spacing:-0.396px;-webkit-text-stroke:0.05px #333">Morocco</span>
<span style="left:300.66px;top:465.31px;font-size:8.5px;font-weight:400;color:#333;letter-spacing:-0.363px;-webkit-text-stroke:0.05px #333">Contractor</span>
<span style="left:378.66px;top:465.31px;font-size:8.5px;font-weight:400;color:#333;letter-spacing:-0.304px;-webkit-text-stroke:0.05px #333">Project Manager</span>
<span style="left:566.66px;top:459.61px;font-size:8.5px;font-weight:400;color:#262626;letter-spacing:-0.309px;-webkit-text-stroke:0.05px #262626">MAD 19,900</span>
<span style="left:566.71px;top:472.08px;font-size:7.2px;font-weight:400;color:#555;letter-spacing:-0.120px;-webkit-text-stroke:0.10px #555">Monthly</span>
<span style="left:473.38px;top:466.82px;font-size:5.5px;font-weight:700;color:#35a35a;letter-spacing:-0.052px;">FINTECH TEAM</span>
<span style="left:668.48px;top:467.02px;font-size:5.5px;font-weight:700;color:#2c7a4e;letter-spacing:0.015px;">ONGOING</span>
<span style="left:119.66px;top:500.82px;font-size:8.6px;font-weight:400;color:#1f1f1f;letter-spacing:-0.242px;-webkit-text-stroke:0.28px #1f1f1f">Nathan Desai</span>
<span style="left:119.70px;top:513.40px;font-size:7.4px;font-weight:400;color:#5c5c5c;letter-spacing:-0.370px;-webkit-text-stroke:0.10px #5c5c5c">36HD77</span>
<span style="left:218.66px;top:506.61px;font-size:8.5px;font-weight:400;color:#333;letter-spacing:-0.339px;-webkit-text-stroke:0.05px #333">United Kingdom</span>
<span style="left:300.66px;top:506.61px;font-size:8.5px;font-weight:400;color:#333;letter-spacing:-0.439px;-webkit-text-stroke:0.05px #333">EOR Employee</span>
<span style="left:378.66px;top:506.61px;font-size:8.5px;font-weight:400;color:#333;letter-spacing:-0.365px;-webkit-text-stroke:0.05px #333">HR Manager</span>
<span style="left:566.66px;top:500.91px;font-size:8.5px;font-weight:400;color:#262626;letter-spacing:-0.278px;-webkit-text-stroke:0.05px #262626">£ 6,200</span>
<span style="left:566.71px;top:513.38px;font-size:7.2px;font-weight:400;color:#555;letter-spacing:-0.120px;-webkit-text-stroke:0.10px #555">Monthly</span>
<span style="left:473.38px;top:508.12px;font-size:5.5px;font-weight:700;color:#35a35a;letter-spacing:-0.052px;">FINTECH TEAM</span>
<span style="left:668.48px;top:508.32px;font-size:5.5px;font-weight:700;color:#2c7a4e;letter-spacing:0.015px;">ONGOING</span>
</div>
</body></html>
